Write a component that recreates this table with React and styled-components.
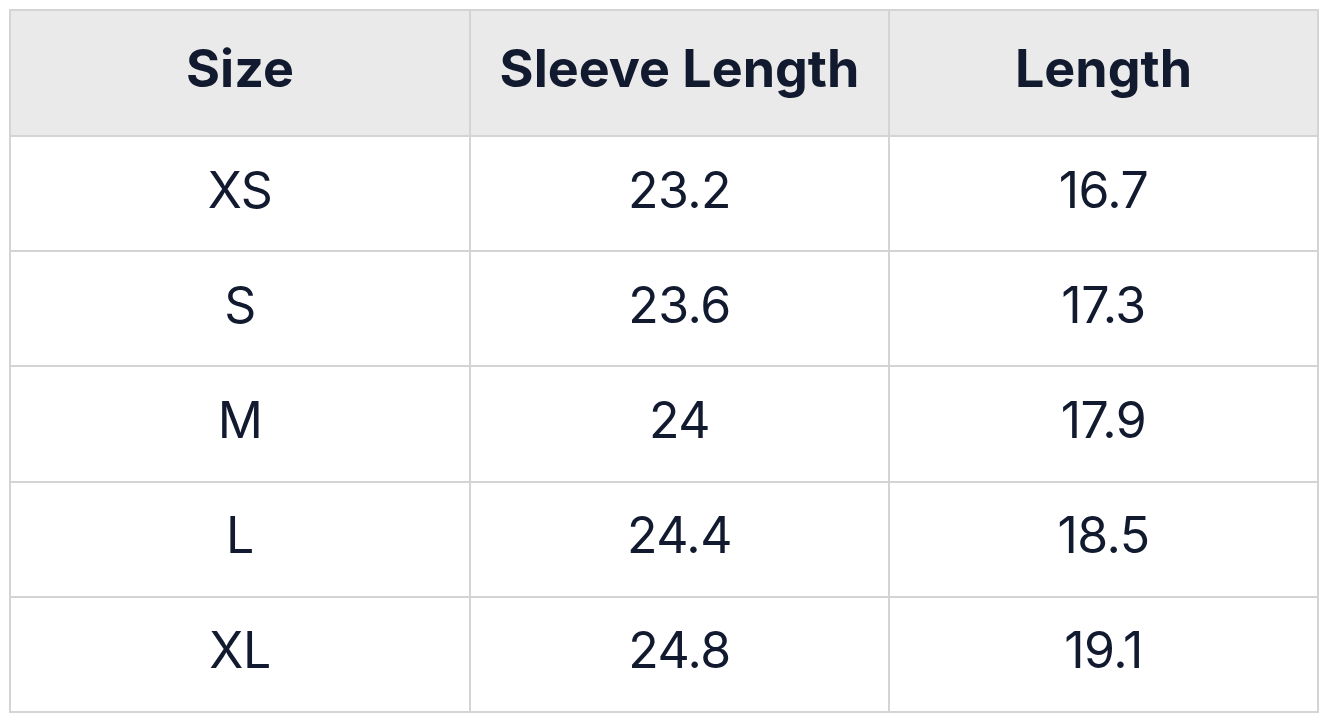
import React from "react";
import styled, { createGlobalStyle } from "styled-components";

const Global = createGlobalStyle`
  html, body { margin: 0; padding: 0; background: #ffffff; }
  body { font-family: "Inter", "Noto Sans", sans-serif; }
`;

const Page = styled.div`
  padding: 9px;
`;

const Grid = styled.div`
  display: grid;
  grid-template-columns: 460px 419px 429px;
  grid-template-rows: 126px repeat(5, 115.2px);
  border-top: 2px solid #d4d4d4;
  border-left: 2px solid #d4d4d4;
  width: max-content;
`;

const Cell = styled.div`
  display: flex;
  align-items: center;
  justify-content: center;
  padding-bottom: ${(p) => (p.$head ? "8px" : "8px")};
  border-right: 2px solid #d4d4d4;
  border-bottom: 2px solid #d4d4d4;
  background: ${(p) => (p.$head ? "#eaeaea" : "#ffffff")};
  color: #111a2e;
  font-size: ${(p) => (p.$head ? "52px" : "50px")};
  font-weight: ${(p) => (p.$head ? 700 : 400)};
  letter-spacing: ${(p) => (p.$head ? "0px" : "-0.5px")};
  line-height: 1;
  box-sizing: border-box;
`;

const headers = ["Size", "Sleeve Length", "Length"];
const rows = [
  ["XS", "23.2", "16.7"],
  ["S", "23.6", "17.3"],
  ["M", "24", "17.9"],
  ["L", "24.4", "18.5"],
  ["XL", "24.8", "19.1"],
];

export default function App() {
  return (
    <>
      <Global />
      <Page>
        <Grid>
          {headers.map((h) => (
            <Cell key={h} $head>
              {h}
            </Cell>
          ))}
          {rows.map((r) =>
            r.map((v, i) => <Cell key={r[0] + i}>{v}</Cell>)
          )}
        </Grid>
      </Page>
    </>
  );
}
